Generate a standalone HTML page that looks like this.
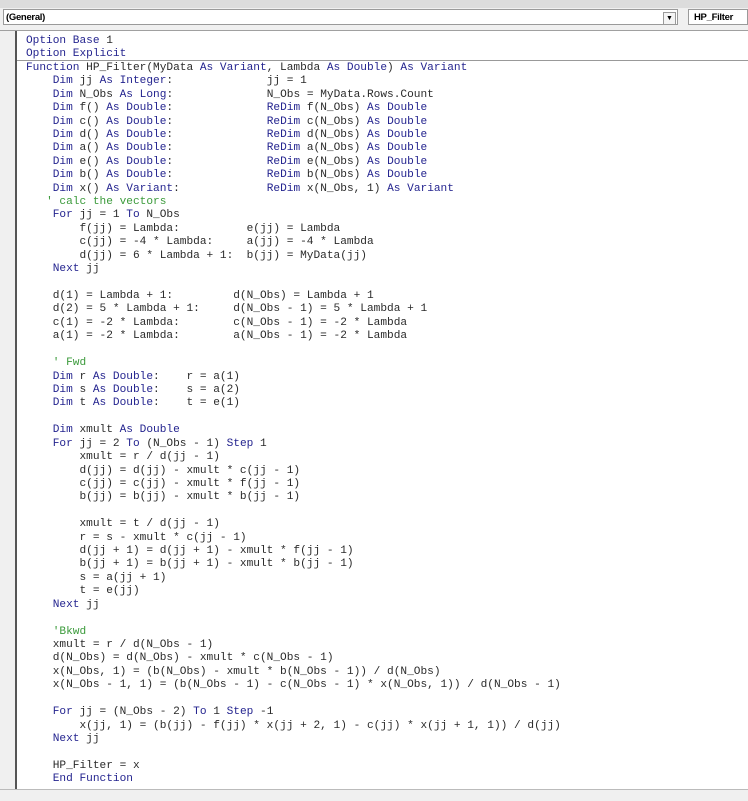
<!DOCTYPE html>
<html><head><meta charset="utf-8"><style>
body{margin:0;width:748px;height:800px;overflow:hidden;background:#fff;position:relative;font-family:"Liberation Sans",sans-serif}
.top{position:absolute;left:0;top:0;width:748px;height:8px;background:#dcdcdc;border-bottom:1px solid #b0b0b0}
.bar{position:absolute;left:0;top:8px;width:748px;height:22px;background:#f0f0f0;border-bottom:1px solid #a0a0a0}
.cb{position:absolute;left:3px;top:9px;width:675px;height:16px;background:#fff;border:1px solid #9a9a9a;font-size:9.5px;font-weight:bold;line-height:16px;padding-left:2px;box-sizing:border-box;letter-spacing:-0.3px}
.arr{position:absolute;left:663px;top:12px;width:11px;height:11px;border:1px solid #999;background:#f4f4f4;font-size:7px;text-align:center;line-height:11px}
.cb2{position:absolute;left:688px;top:9px;width:60px;height:16px;background:#fff;border:1px solid #9a9a9a;font-size:9.5px;font-weight:bold;line-height:16px;padding-left:5px;box-sizing:border-box;letter-spacing:-0.3px}
.gut{position:absolute;left:0;top:31px;width:15px;height:758px;background:#f0f0f0;border-right:2px solid #555}
.sep{position:absolute;left:17px;top:60px;width:731px;height:1px;background:#999}
pre{position:absolute;left:26px;top:35px;margin:0;font-family:"Liberation Mono",monospace;font-size:11.15px;line-height:13.42px;color:#2a2a2a}
.k{color:#24248f}.c{color:#3a9a3a}
.bot{position:absolute;left:0;top:789px;width:748px;height:11px;background:#f0f0f0;border-top:1px solid #bbb}
</style></head><body>
<div class="top"></div><div class="bar"></div>
<div class="cb">(General)</div><div class="arr">▼</div><div class="cb2">HP_Filter</div>
<div class="gut"></div><div class="sep"></div>
<pre><span class="k">Option Base</span> 1
<span class="k">Option Explicit</span>
<span class="k">Function</span> HP_Filter(MyData <span class="k">As Variant</span>, Lambda <span class="k">As Double</span>) <span class="k">As Variant</span>
    <span class="k">Dim</span> jj <span class="k">As Integer</span>:              jj = 1
    <span class="k">Dim</span> N_Obs <span class="k">As Long</span>:              N_Obs = MyData.Rows.Count
    <span class="k">Dim</span> f() <span class="k">As Double</span>:              <span class="k">ReDim</span> f(N_Obs) <span class="k">As Double</span>
    <span class="k">Dim</span> c() <span class="k">As Double</span>:              <span class="k">ReDim</span> c(N_Obs) <span class="k">As Double</span>
    <span class="k">Dim</span> d() <span class="k">As Double</span>:              <span class="k">ReDim</span> d(N_Obs) <span class="k">As Double</span>
    <span class="k">Dim</span> a() <span class="k">As Double</span>:              <span class="k">ReDim</span> a(N_Obs) <span class="k">As Double</span>
    <span class="k">Dim</span> e() <span class="k">As Double</span>:              <span class="k">ReDim</span> e(N_Obs) <span class="k">As Double</span>
    <span class="k">Dim</span> b() <span class="k">As Double</span>:              <span class="k">ReDim</span> b(N_Obs) <span class="k">As Double</span>
    <span class="k">Dim</span> x() <span class="k">As Variant</span>:             <span class="k">ReDim</span> x(N_Obs, 1) <span class="k">As Variant</span>
   <span class="c">' calc the vectors</span>
    <span class="k">For</span> jj = 1 <span class="k">To</span> N_Obs
        f(jj) = Lambda:          e(jj) = Lambda
        c(jj) = -4 * Lambda:     a(jj) = -4 * Lambda
        d(jj) = 6 * Lambda + 1:  b(jj) = MyData(jj)
    <span class="k">Next</span> jj

    d(1) = Lambda + 1:         d(N_Obs) = Lambda + 1
    d(2) = 5 * Lambda + 1:     d(N_Obs - 1) = 5 * Lambda + 1
    c(1) = -2 * Lambda:        c(N_Obs - 1) = -2 * Lambda
    a(1) = -2 * Lambda:        a(N_Obs - 1) = -2 * Lambda

    <span class="c">' Fwd</span>
    <span class="k">Dim</span> r <span class="k">As Double</span>:    r = a(1)
    <span class="k">Dim</span> s <span class="k">As Double</span>:    s = a(2)
    <span class="k">Dim</span> t <span class="k">As Double</span>:    t = e(1)

    <span class="k">Dim</span> xmult <span class="k">As Double</span>
    <span class="k">For</span> jj = 2 <span class="k">To</span> (N_Obs - 1) <span class="k">Step</span> 1
        xmult = r / d(jj - 1)
        d(jj) = d(jj) - xmult * c(jj - 1)
        c(jj) = c(jj) - xmult * f(jj - 1)
        b(jj) = b(jj) - xmult * b(jj - 1)

        xmult = t / d(jj - 1)
        r = s - xmult * c(jj - 1)
        d(jj + 1) = d(jj + 1) - xmult * f(jj - 1)
        b(jj + 1) = b(jj + 1) - xmult * b(jj - 1)
        s = a(jj + 1)
        t = e(jj)
    <span class="k">Next</span> jj

    <span class="c">'Bkwd</span>
    xmult = r / d(N_Obs - 1)
    d(N_Obs) = d(N_Obs) - xmult * c(N_Obs - 1)
    x(N_Obs, 1) = (b(N_Obs) - xmult * b(N_Obs - 1)) / d(N_Obs)
    x(N_Obs - 1, 1) = (b(N_Obs - 1) - c(N_Obs - 1) * x(N_Obs, 1)) / d(N_Obs - 1)

    <span class="k">For</span> jj = (N_Obs - 2) <span class="k">To</span> 1 <span class="k">Step</span> -1
        x(jj, 1) = (b(jj) - f(jj) * x(jj + 2, 1) - c(jj) * x(jj + 1, 1)) / d(jj)
    <span class="k">Next</span> jj

    HP_Filter = x
    <span class="k">End Function</span>
</pre>
<div class="bot"></div>
</body></html>
